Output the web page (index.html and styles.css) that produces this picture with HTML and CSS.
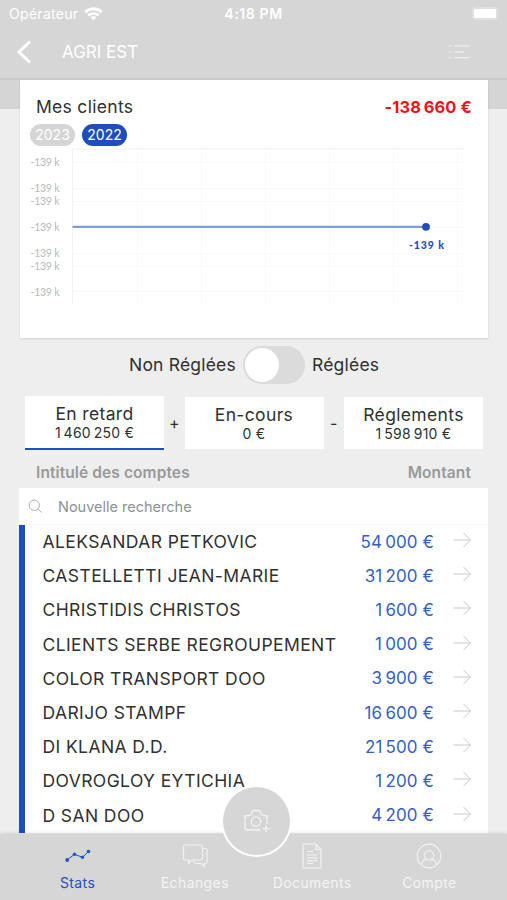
FILE: index.html
```html
<!DOCTYPE html>
<html lang="fr">
<head>
    <meta charset="UTF-8">
    <meta name="viewport" content="width=device-width, initial-scale=1.0">
    <title>AGRI EST</title>
    <link rel="stylesheet" href="styles.css">
</head>
<body>
    <div class="app">
        <header class="header">
            <div class="status-bar">
                <div class="carrier">
                    <span class="carrier-name">Opérateur</span>
                    <svg class="wifi" width="19" height="14" viewBox="0 0 19 14" fill="none" stroke="#fff">
                        <path d="M1.2 5.1a12 12 0 0 1 16.6 0" stroke-width="2.9"/>
                        <path d="M4.3 8.5a7.6 7.6 0 0 1 10.4 0" stroke-width="2.6"/>
                        <path d="M9.5 13.4l-2.9-3a4.3 4.3 0 0 1 5.8 0z" fill="#fff" stroke="none"/>
                    </svg>
                </div>
                <div class="time">4:18 PM</div>
                <div class="battery"><span class="battery-level"></span></div>
            </div>
            <div class="nav-bar">
                <svg width="16" height="24" viewBox="0 0 16 24" fill="none" stroke="#fff" stroke-width="3">
                    <path d="M14 1.5L3 12l11 10.5"/>
                </svg>
                <h1>AGRI EST</h1>
                <svg width="21" height="16" viewBox="0 0 21 16" fill="none" stroke="#f3f3f3" stroke-width="1.1">
                    <path d="M0 2h2.5M5 2h15.5M0 8h2.5M5 8h10.5M0 13.7h2.5M5 13.7h15.5"/>
                </svg>
            </div>
        </header>

        <main class="content">
            <section class="card">
                <div class="card-head">
                    <h2>Mes clients</h2>
                    <span class="total">-138&thinsp;660 €</span>
                </div>
                <div class="years">
                    <span class="year">2023</span>
                    <span class="year active">2022</span>
                </div>
                <svg class="chart" width="468" height="190" viewBox="20 148 468 190">
                    <g class="grid">
                        <path d="M72 162.5H464M72 188.5H464M72 201.5H464M72 227.5H464M72 253.5H464M72 266.5H464M72 291.5H464"/>
                        <path d="M137.5 149V304M201.5 149V304M265.5 149V304M329.5 149V304M393.5 149V304M457.5 149V304"/>
                        <path d="M72 149H464" class="grid-edge"/>
                        <path d="M72.5 149V304" class="grid-edge"/>
                    </g>
                    <g class="axis">
                        <text x="30.5" y="165.5" textLength="29">-139 k</text>
                        <text x="30.5" y="191.5" textLength="29">-139 k</text>
                        <text x="30.5" y="204.5" textLength="29">-139 k</text>
                        <text x="30.5" y="230.5" textLength="29">-139 k</text>
                        <text x="30.5" y="256.5" textLength="29">-139 k</text>
                        <text x="30.5" y="269.5" textLength="29">-139 k</text>
                        <text x="30.5" y="295.5" textLength="29">-139 k</text>
                    </g>
                    <path d="M72.5 226.8H426" class="line"/>
                    <circle cx="426" cy="226.8" r="3.9" class="point"/>
                    <text x="409" y="248.5" class="point-label" textLength="35">-139 k</text>
                </svg>
            </section>

            <div class="toggle-row">
                <span class="toggle-label left">Non Réglées</span>
                <span class="toggle"><span class="knob"></span></span>
                <span class="toggle-label">Réglées</span>
            </div>

            <div class="filters">
                <div class="filter active"><b>En retard</b><span>1&thinsp;460&thinsp;250 €</span></div>
                <span class="sign">+</span>
                <div class="filter"><b>En-cours</b><span>0 €</span></div>
                <span class="sign">-</span>
                <div class="filter"><b>Réglements</b><span>1&thinsp;598&thinsp;910 €</span></div>
            </div>

            <div class="columns">
                <span>Intitulé des comptes</span>
                <span>Montant</span>
            </div>

            <div class="list">
                <div class="search">
                    <svg width="15" height="15" viewBox="0 0 15 15" fill="none" stroke="#b0b0b0">
                        <circle cx="6.3" cy="6.3" r="5.2"/>
                        <path d="M10 10l3.5 3.5"/>
                    </svg>
                    <span>Nouvelle recherche</span>
                </div>
                <div class="rows" id="rows"></div>
            </div>
        </main>

        <nav class="tabs">
            <div class="tab active">
                <svg width="28" height="26" viewBox="0 0 28 26" fill="none" stroke="#2650bd">
                    <path d="M3 17l7.5-5.7 8 3 6-5.8" stroke-width="1"/>
                    <g fill="#2650bd" stroke="none">
                        <circle cx="3.2" cy="17" r="1.9"/>
                        <circle cx="10.5" cy="11.3" r="1.7"/>
                        <circle cx="18.5" cy="14.3" r="1.7"/>
                        <circle cx="24.5" cy="8.5" r="1.8"/>
                    </g>
                </svg>
                <span>Stats</span>
            </div>
            <div class="tab">
                <svg width="28" height="26" viewBox="0 0 28 26" fill="none" stroke="#f1f1f1" stroke-width="1.2">
                    <path d="M4 2h16q1.5 0 1.5 1.5v12q0 1.5-1.5 1.5H11l-3.5 3.5V17H4q-1.500 0-1.500-1.500v-12Q2.500 2 4 2z"/>
                    <path d="M21.5 5.5H25q1 0 1 1v12.5q0 1.5-1.5 1.5H23.5v3L20.5 20.5H14L12.5 18"/>
                </svg>
                <span>Echanges</span>
            </div>
            <div class="tab">
                <svg width="28" height="26" viewBox="0 0 28 26" fill="none" stroke="#f1f1f1" stroke-width="1.2">
                    <path d="M5 1h13l5 5.5V25H5zM18 1v5.5h5M9 8.5h6M9 12h10.5M9 14.8h10.5M9 17.6h10.5M9 20.4h6"/>
                </svg>
                <span>Documents</span>
            </div>
            <div class="tab">
                <svg width="28" height="26" viewBox="0 0 28 26" fill="none" stroke="#f1f1f1" stroke-width="1.2">
                    <circle cx="14" cy="13" r="11.8"/>
                    <circle cx="14" cy="12.3" r="4.7"/>
                    <path d="M6.5 22c.5-3.5 2.5-5.5 5-6M21.5 22c-.5-3.5-2.5-5.5-5-6"/>
                </svg>
                <span>Compte</span>
            </div>
            <div class="camera">
                <svg width="28" height="26" viewBox="0 0 28 26" fill="none" stroke="#f3f3f3" stroke-width="1.3">
                    <path d="M17.5 23H4q-2 0-2-2V10.500q0-2 2-2h2q1.500 0 2-1L9 5q.6-1.500 2-1.500h4.500q1.400 0 2 1.500l1 2.500q.5 1 2 1h1.500q2 0 2 2V17"/>
                    <circle cx="13" cy="14.5" r="4.7"/>
                    <path d="M23 18.5v6.5M19.700 21.700h6.500"/>
                </svg>
            </div>
        </nav>
    </div>

    <script>
        const accounts = [
            ['ALEKSANDAR PETKOVIC', '54 000'],
            ['CASTELLETTI JEAN-MARIE', '31 200'],
            ['CHRISTIDIS CHRISTOS', '1 600'],
            ['CLIENTS SERBE REGROUPEMENT', '1 000'],
            ['COLOR TRANSPORT DOO', '3 900'],
            ['DARIJO STAMPF', '16 600'],
            ['DI KLANA D.D.', '21 500'],
            ['DOVROGLOY EYTICHIA', '1 200'],
            ['D SAN DOO', '4 200']
        ];

        document.getElementById('rows').innerHTML = accounts.map(([name, amount]) => `
            <div class="row">
                <span class="name">${name}</span>
                <span class="amount">${amount.replace(' ', '&thinsp;')} €</span>
                <svg width="19" height="18" viewBox="0 0 19 18" fill="none" stroke="#c8c8c8">
                    <path d="M.5 9h17M10.5 2l7 7-7 7"/>
                </svg>
            </div>`).join('');
    </script>
</body>
</html>
```
FILE: styles.css
```css
* {
    box-sizing: border-box;
}
body {
    margin: 0;
    font-family: Inter, "Liberation Sans", sans-serif;
    color: #303030;
    background-color: #eee;
}
svg {
    display: block;
    flex: none;
}
.app {
    width: 507px;
    height: 900px;
    display: flex;
    flex-direction: column;
    overflow: hidden;
    background: linear-gradient(#d5d5d5 109px, #eee 109px);
}
.header {
    height: 80px;
    flex: none;
    background-color: #d6d6d6;
    border-bottom: 2px solid #cacaca;
    color: #fff;
}
.status-bar {
    height: 27px;
    display: grid;
    grid-template-columns: 1fr auto 1fr;
    align-items: center;
    padding: 0 9px;
}
.carrier {
    display: flex;
    align-items: center;
    gap: 6px;
    font-size: 14px;
    letter-spacing: 0.3px;
}
.time {
    font-size: 14px;
    font-weight: 600;
    letter-spacing: 0.6px;
}
.battery {
    justify-self: end;
    width: 26px;
    height: 13px;
    padding: 2px;
    border-radius: 3px;
    background-color: #dfdfdf;
}
.battery-level {
    display: block;
    height: 9px;
    border-radius: 1px;
    background-color: #fff;
}
.nav-bar {
    height: 51px;
    display: flex;
    align-items: center;
    padding: 0 37px 1px 16px;
}
h1 {
    flex: 1;
    margin: 0 0 0 30px;
    font-size: 17px;
    font-weight: 400;
}
.content {
    flex: 1;
    min-height: 0;
    overflow: hidden;
    padding: 0 19px 0 20px;
}
.card {
    width: 468px;
    height: 258px;
    background-color: #fff;
    box-shadow: 0 1px 2px rgba(0, 0, 0, 0.12);
}
.card-head {
    height: 44px;
    display: flex;
    justify-content: space-between;
    align-items: center;
    padding: 9px 16px 0;
}
h2 {
    margin: 0;
    font-size: 17.5px;
    font-weight: 400;
    letter-spacing: 0.3px;
}
.total {
    color: #f01414;
    font-size: 16.5px;
    font-weight: 700;
    letter-spacing: 0.1px;
}
.years {
    height: 24px;
    display: flex;
    gap: 7px;
    padding-left: 10px;
}
.year {
    width: 45px;
    height: 22px;
    border-radius: 11px;
    background-color: #d5d5d5;
    color: #fff;
    font-size: 14px;
    line-height: 22px;
    text-align: center;
}
.year.active {
    background-color: #1f4dbb;
}
.grid path {
    stroke: #f9f9f9;
}
.grid .grid-edge {
    stroke: #f2f2f2;
}
.axis text {
    font-family: Lato, sans-serif;
    font-size: 10.5px;
    fill: #b9b9b9;
}
.line {
    stroke: #819cd8;
    stroke-width: 2.2;
}
.point {
    fill: #1f4dbb;
}
.point-label {
    font-family: Lato, sans-serif;
    font-size: 10.5px;
    font-weight: 900;
    fill: #1f4dbb;
}
.toggle-row {
    height: 58px;
    display: flex;
    align-items: center;
    padding: 0 0 5px 109px;
    font-size: 17.5px;
    letter-spacing: 0.2px;
}
.toggle-label.left {
    width: 114px;
    white-space: nowrap;
}
.toggle {
    width: 62px;
    height: 38px;
    margin-right: 7px;
    padding: 2px;
    border-radius: 19px;
    background-color: #dbdbdb;
}
.knob {
    display: block;
    width: 34px;
    height: 34px;
    border-radius: 50%;
    background-color: #fff;
}
.filters {
    height: 54px;
    display: flex;
    align-items: center;
    padding-left: 5px;
}
.filter {
    width: 139px;
    height: 52px;
    display: flex;
    flex-direction: column;
    align-items: center;
    padding-top: 7px;
    background-color: #fff;
}
.filter.active {
    height: 54px;
    border-bottom: 2px solid #1f4dbb;
}
.filter b {
    font-size: 17.5px;
    font-weight: 400;
    line-height: 21px;
    letter-spacing: 0.35px;
}
.filter span {
    font-size: 14px;
    line-height: 18px;
    letter-spacing: 0.25px;
}
.sign {
    width: 20.5px;
    text-align: center;
    font-size: 16px;
}
.columns {
    height: 38px;
    display: flex;
    justify-content: space-between;
    align-items: center;
    padding: 7px 17px 0 16px;
    color: #999;
    font-size: 15.5px;
    font-weight: 600;
    letter-spacing: 0.1px;
}
.list {
    width: 469px;
    margin-left: -1px;
    background-color: #fff;
}
.search {
    height: 37px;
    display: flex;
    align-items: center;
    gap: 14px;
    padding-left: 10px;
    border-bottom: 1px solid #f3f3f3;
    color: #8b9297;
    font-size: 14.5px;
}
.search svg {
    margin-left: -1px;
    margin-right: 1px;
}
.rows {
    border-left: 6px solid #1f4dbb;
}
.row {
    height: 34.2px;
    display: flex;
    align-items: center;
    padding: 0 16px 1px 17.5px;
}
.name {
    flex: 1;
    font-size: 17.5px;
    letter-spacing: 0.4px;
}
.amount {
    margin-right: 19px;
    color: #355fc5;
    font-size: 17px;
    letter-spacing: 0.1px;
}
.row svg {
    margin-bottom: 3px;
}
.tabs {
    position: relative;
    height: 66px;
    flex: none;
    display: grid;
    grid-template-columns: repeat(4, 117.3px);
    justify-content: center;
    background-color: #d6d6d6;
    box-shadow: 0 -1px 3px rgba(0, 0, 0, 0.12);
    color: #f4f4f4;
}
.tab {
    display: flex;
    flex-direction: column;
    align-items: center;
    padding-top: 9px;
    font-size: 14px;
    line-height: 18px;
    letter-spacing: 0.4px;
}
.tab svg {
    margin-bottom: 5px;
}
.tab.active {
    color: #2650bd;
}
/* floating button over the list and the tab bar */
.camera {
    position: absolute;
    left: 221px;
    top: -49px;
    width: 71px;
    height: 72px;
    display: flex;
    align-items: center;
    justify-content: center;
    padding-bottom: 3px;
    border-radius: 50%;
    border: 2px solid #fff;
    background-color: #d6d6d6;
}
```
